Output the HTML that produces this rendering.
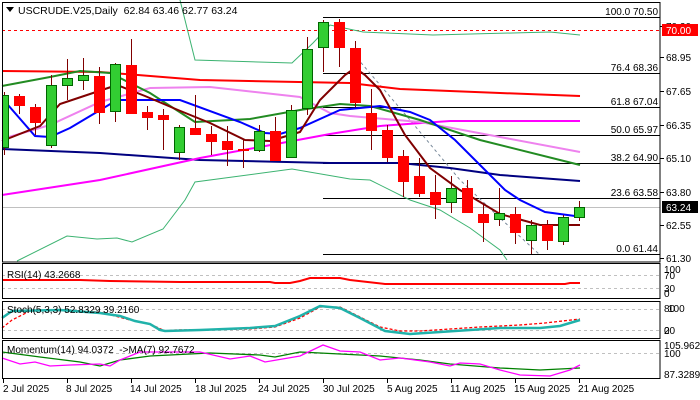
<!DOCTYPE html>
<html><head><meta charset="utf-8"><style>
body{margin:0;background:#fff;}
svg{display:block;font-family:"Liberation Sans",sans-serif;font-size:10px;}
</style></head><body>
<svg width="700" height="400" viewBox="0 0 700 400" xmlns="http://www.w3.org/2000/svg">
<rect width="700" height="400" fill="#fff"/>
<!-- fib lines -->
<g stroke="#000" stroke-width="1">
<line x1="323" y1="17.5" x2="660" y2="17.5"/>
<line x1="323" y1="73.5" x2="660" y2="73.5"/>
<line x1="323" y1="107.5" x2="660" y2="107.5"/>
<line x1="323" y1="135.5" x2="660" y2="135.5"/>
<line x1="323" y1="163.5" x2="660" y2="163.5"/>
<line x1="323" y1="198.5" x2="660" y2="198.5"/>
<line x1="323" y1="254.5" x2="660" y2="254.5"/>
</g>
<line x1="2" y1="207.5" x2="660" y2="207.5" stroke="#c0c0c0"/>
<line x1="2" y1="30.5" x2="660" y2="30.5" stroke="#f00" stroke-dasharray="3,3"/>
<g font-size="10" fill="#000" text-anchor="end">
<text x="658" y="15">100.0 70.50</text>
<text x="658" y="71">76.4 68.36</text>
<text x="658" y="105">61.8 67.04</text>
<text x="658" y="133">50.0 65.97</text>
<text x="658" y="161">38.2 64.90</text>
<text x="658" y="196">23.6 63.58</text>
<text x="658" y="252">0.0 61.44</text>
</g>
<!-- trendline -->
<polyline points="357,58 410,120 460,180 500,218 540,255" fill="none" stroke="#778899" stroke-dasharray="3,3"/>
<!-- bollinger -->
<polyline points="180,0 195,60 292,63 313,43 330,25 363,32 433,35 550,32 580,35" fill="none" stroke="#3cb371"/>
<polyline points="17,261 67,236 97,239 117,238 132,242 163,229 185,200 195,182 292,169 350,179 370,180 410,200 440,210 470,228 500,250 507,260" fill="none" stroke="#3cb371"/>
<!-- MAs -->
<polyline points="2,71 100,72 200,80 350,83 400,89 500,93 580,96" fill="none" stroke="#f00" stroke-width="2"/>
<polyline points="2,149 100,153 200,160 330,163 400,163 450,168 500,175 580,181" fill="none" stroke="#000080" stroke-width="2"/>
<polyline points="2,195 100,180 200,158 260,147 330,134 380,126 450,121 580,121" fill="none" stroke="#f0f" stroke-width="2"/>
<polyline points="2,139 50,125 100,102 150,88 210,87 300,97 330,113 350,116 420,122 500,137 580,152" fill="none" stroke="#ee82ee" stroke-width="2"/>
<polyline points="2,86 50,77 80,71 110,73 150,93 195,122 250,119 300,110 340,104 370,106 420,120 480,140 580,165" fill="none" stroke="#228b22" stroke-width="2"/>
<polyline points="8,105 35,136 50,137 70,128 117,100 180,100 240,122 265,133 280,134 300,128 340,110 380,106 410,112 430,120 455,140 480,165 505,190 520,200 545,212 575,216" fill="none" stroke="#00f" stroke-width="2"/>
<polyline points="2,141 40,126 60,104 90,94 117,85 145,96 178,110 210,123 245,140 270,141 300,132 320,100 345,75 355,68 365,75 380,90 405,135 430,168 460,190 500,214 540,225 580,225" fill="none" stroke="#800000" stroke-width="2"/>
<!-- candles -->
<g stroke-width="1">
<g stroke="#800000" fill="none">
<line x1="4.5" y1="92" x2="4.5" y2="155"/>
<line x1="19.5" y1="94" x2="19.5" y2="114"/>
<line x1="35.5" y1="104" x2="35.5" y2="135"/>
<line x1="51.5" y1="75" x2="51.5" y2="148"/>
<line x1="67.5" y1="59" x2="67.5" y2="100"/>
<line x1="83.5" y1="58" x2="83.5" y2="90"/>
<line x1="99.5" y1="67" x2="99.5" y2="124"/>
<line x1="115.5" y1="63" x2="115.5" y2="122"/>
<line x1="131.5" y1="39" x2="131.5" y2="114"/>
<line x1="147.5" y1="106" x2="147.5" y2="130"/>
<line x1="163.5" y1="109" x2="163.5" y2="150"/>
<line x1="179.5" y1="125" x2="179.5" y2="160"/>
<line x1="195.5" y1="95" x2="195.5" y2="135"/>
<line x1="211.5" y1="126" x2="211.5" y2="155"/>
<line x1="227.5" y1="126" x2="227.5" y2="166"/>
<line x1="243.5" y1="140" x2="243.5" y2="168"/>
<line x1="259.5" y1="125" x2="259.5" y2="152"/>
<line x1="275.5" y1="117" x2="275.5" y2="160"/>
<line x1="291.5" y1="105" x2="291.5" y2="158"/>
<line x1="307.5" y1="37" x2="307.5" y2="115"/>
<line x1="323.5" y1="20" x2="323.5" y2="72"/>
<line x1="339.5" y1="19" x2="339.5" y2="67"/>
<line x1="355.5" y1="41" x2="355.5" y2="107"/>
<line x1="371.5" y1="89" x2="371.5" y2="150"/>
<line x1="387.5" y1="125" x2="387.5" y2="162"/>
<line x1="403.5" y1="150" x2="403.5" y2="197"/>
<line x1="419.5" y1="158" x2="419.5" y2="197"/>
<line x1="435.5" y1="175" x2="435.5" y2="219"/>
<line x1="451.5" y1="176" x2="451.5" y2="213"/>
<line x1="467.5" y1="180" x2="467.5" y2="213"/>
<line x1="483.5" y1="204" x2="483.5" y2="242"/>
<line x1="499.5" y1="188" x2="499.5" y2="226"/>
<line x1="515.5" y1="207" x2="515.5" y2="244"/>
<line x1="531.5" y1="220" x2="531.5" y2="254"/>
<line x1="547.5" y1="220" x2="547.5" y2="250"/>
<line x1="563.5" y1="215" x2="563.5" y2="245"/>
<line x1="579.5" y1="201" x2="579.5" y2="221"/>
</g>
<g fill="#32cd32" stroke="#006400">
<rect x="2.5" y="95.5" width="6" height="52"/>
<rect x="46.5" y="85.5" width="10" height="60"/>
<rect x="62.5" y="78.5" width="10" height="7"/>
<rect x="78.5" y="75.5" width="10" height="5"/>
<rect x="110.5" y="64.5" width="10" height="47"/>
<rect x="174.5" y="127.5" width="10" height="25"/>
<rect x="254.5" y="131.5" width="10" height="19"/>
<rect x="286.5" y="110.5" width="10" height="47"/>
<rect x="302.5" y="49.5" width="10" height="59"/>
<rect x="318.5" y="22.5" width="10" height="25"/>
<rect x="446.5" y="188.5" width="10" height="14"/>
<rect x="494.5" y="213.5" width="10" height="6"/>
<rect x="526.5" y="225.5" width="10" height="15"/>
<rect x="558.5" y="217.5" width="10" height="24"/>
<rect x="574.5" y="207.5" width="10" height="10"/>
</g>
<g fill="#f00" stroke="#f00">
<rect x="14.5" y="96.5" width="10" height="9"/>
<rect x="30.5" y="107.5" width="10" height="15"/>
<rect x="94.5" y="76.5" width="10" height="36"/>
<rect x="126.5" y="65.5" width="10" height="48"/>
<rect x="142.5" y="112.5" width="10" height="5"/>
<rect x="158.5" y="115.5" width="10" height="4"/>
<rect x="190.5" y="128.5" width="10" height="6"/>
<rect x="206.5" y="134.5" width="10" height="7"/>
<rect x="222.5" y="141.5" width="10" height="8"/>
<rect x="238.5" y="149.5" width="10" height="1"/>
<rect x="270.5" y="131.5" width="10" height="29"/>
<rect x="334.5" y="22.5" width="10" height="25"/>
<rect x="350.5" y="48.5" width="10" height="54"/>
<rect x="366.5" y="113.5" width="10" height="17"/>
<rect x="382.5" y="130.5" width="10" height="27"/>
<rect x="398.5" y="156.5" width="10" height="25"/>
<rect x="414.5" y="176.5" width="10" height="17"/>
<rect x="430.5" y="192.5" width="10" height="12"/>
<rect x="462.5" y="188.5" width="10" height="24"/>
<rect x="478.5" y="214.5" width="10" height="8"/>
<rect x="510.5" y="214.5" width="10" height="18"/>
<rect x="542.5" y="225.5" width="10" height="15"/>
</g>
</g>
<!-- header -->
<path d="M6,7 L14,7 L10,12 Z" fill="#000"/>
<text x="18" y="14" font-size="10.5">USCRUDE.V25,Daily&#160;&#160;62.84 63.46 62.77 63.24</text>
<!-- RSI -->
<line x1="2" y1="275.5" x2="660" y2="275.5" stroke="#c0c0c0" stroke-dasharray="3,3"/>
<line x1="2" y1="288.5" x2="660" y2="288.5" stroke="#c0c0c0" stroke-dasharray="3,3"/>
<polyline points="2,280 80,280 110,281 180,282 270,282 275,283 290,283 300,281 310,278 340,278 350,280 385,284 500,284 565,284 570,283 580,283" fill="none" stroke="#f00" stroke-width="2"/>
<text x="7" y="278">RSI(14) 43.2668</text>
<!-- Stoch -->
<line x1="2" y1="309.5" x2="660" y2="309.5" stroke="#c0c0c0" stroke-dasharray="3,3"/>
<line x1="2" y1="330.5" x2="660" y2="330.5" stroke="#c0c0c0" stroke-dasharray="3,3"/>
<polyline points="2,328 12,320 30,311 60,310 100,312 130,320 150,324 165,331 175,330 250,329 275,327 300,318 320,307 340,307 360,317 380,327 400,331 420,331 480,327 520,325 545,323 580,319" fill="none" stroke="#f00" stroke-width="1.3" stroke-dasharray="3,2"/>
<polyline points="2,318 12,311 60,310 100,313 120,316 135,321 150,324 160,330 165,331 200,330 250,328 275,326 300,316 320,306 340,308 360,318 385,331 410,334 440,332 470,330 500,328 540,328 560,326 580,320" fill="none" stroke="#20b2aa" stroke-width="2.5"/>
<text x="7" y="313">Stoch(5,3,3) 52.8329 39.2160</text>
<!-- Momentum -->
<line x1="2" y1="353.5" x2="660" y2="353.5" stroke="#c0c0c0" stroke-dasharray="3,3"/>
<polyline points="2,352 40,357 80,362 100,366 120,360 150,356 210,353 260,355 275,357 300,352 320,353 380,356 420,360 450,364 500,368 540,370 580,368" fill="none" stroke="#008000" stroke-width="1.3"/>
<polyline points="2,358 20,364 35,362 50,366 70,365 100,364 110,366 120,360 140,352 200,352 230,359 250,356 265,362 300,356 323,345 340,351 360,352 380,360 400,358 430,362 450,366 460,363 480,364 500,370 520,375 550,376 570,370 580,365" fill="none" stroke="#f0f" stroke-width="1.3"/>
<text x="7" y="353">Momentum(14) 94.0372&#160;&#160;-&gt;MA(7) 92.7672</text>
<!-- frames -->
<g fill="none" stroke="#000" stroke-width="1">
<rect x="2.5" y="2.5" width="657.5" height="259.5"/>
<rect x="2.5" y="263.5" width="657.5" height="35"/>
<rect x="2.5" y="301.5" width="657.5" height="37"/>
<rect x="2.5" y="340.5" width="657.5" height="38"/>
</g>
<!-- right axis -->
<g stroke="#000">
<line x1="660" y1="26.5" x2="664" y2="26.5"/><line x1="660" y1="57.5" x2="664" y2="57.5"/>
<line x1="660" y1="91.5" x2="664" y2="91.5"/><line x1="660" y1="125.5" x2="664" y2="125.5"/>
<line x1="660" y1="158.5" x2="664" y2="158.5"/><line x1="660" y1="192.5" x2="664" y2="192.5"/>
<line x1="660" y1="225.5" x2="664" y2="225.5"/><line x1="660" y1="258.5" x2="664" y2="258.5"/>
</g>
<g font-size="10" fill="#000">
<text x="666" y="30">70.20</text>
<text x="666" y="61">68.95</text>
<text x="666" y="95">67.65</text>
<text x="666" y="129">66.35</text>
<text x="666" y="162">65.10</text>
<text x="666" y="196">63.80</text>
<text x="666" y="229">62.55</text>
<text x="666" y="262">61.30</text>
<text x="664" y="273">100</text><text x="664" y="279">70</text>
<text x="664" y="292">30</text><text x="664" y="297">0</text>
<text x="664" y="312">80</text><text x="668" y="312">100</text>
<text x="664" y="334">20</text><text x="664" y="334">0</text>
<text x="664" y="349">105.9621</text><text x="664" y="357">100</text>
<text x="664" y="378">87.3289</text>
</g>
<rect x="662" y="24" width="36" height="12" fill="#f00"/>
<text x="666" y="34" fill="#fff">70.00</text>
<rect x="662" y="201" width="36" height="12" fill="#000"/>
<text x="666" y="211" fill="#fff">63.24</text>
<!-- dates -->
<g stroke="#000">
<line x1="3.5" y1="379" x2="3.5" y2="383"/><line x1="67.5" y1="379" x2="67.5" y2="383"/>
<line x1="131.5" y1="379" x2="131.5" y2="383"/><line x1="195.5" y1="379" x2="195.5" y2="383"/>
<line x1="259.5" y1="379" x2="259.5" y2="383"/><line x1="323.5" y1="379" x2="323.5" y2="383"/>
<line x1="387.5" y1="379" x2="387.5" y2="383"/><line x1="451.5" y1="379" x2="451.5" y2="383"/>
<line x1="515.5" y1="379" x2="515.5" y2="383"/><line x1="579.5" y1="379" x2="579.5" y2="383"/>
</g>
<g font-size="10" fill="#000">
<text x="3" y="392">2 Jul 2025</text>
<text x="66" y="392">8 Jul 2025</text>
<text x="130" y="392">14 Jul 2025</text>
<text x="195" y="392">18 Jul 2025</text>
<text x="258" y="392">24 Jul 2025</text>
<text x="323" y="392">30 Jul 2025</text>
<text x="387" y="392">5 Aug 2025</text>
<text x="450" y="392">11 Aug 2025</text>
<text x="514" y="392">15 Aug 2025</text>
<text x="578" y="392">21 Aug 2025</text>
</g>
</svg>
</body></html>
